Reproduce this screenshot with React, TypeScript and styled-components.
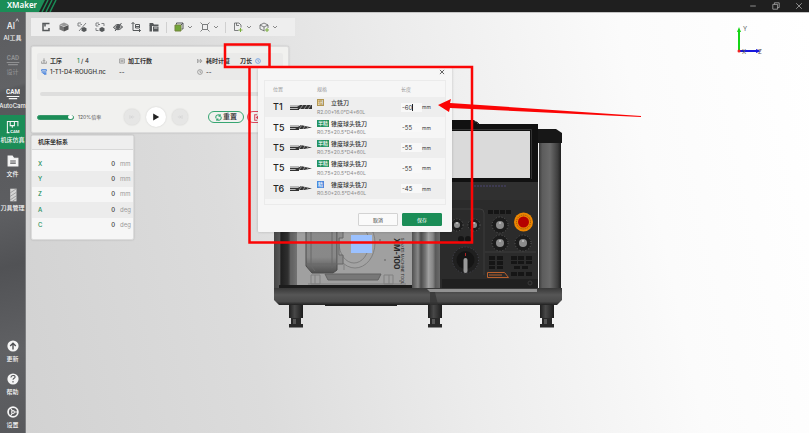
import React, { useState } from "react";
import styled, { createGlobalStyle, css } from "styled-components";

const GREEN = "#1b8d57";

const GlobalStyle = createGlobalStyle`
  * { box-sizing: border-box; }
  body {
    margin: 0;
    font-family: Inter, "Noto Sans CJK SC", sans-serif;
    font-size: 6px;
    line-height: 8px;
    color: #333;
  }
  button, input { font: inherit; color: inherit; margin: 0; padding: 0; }
  button { border: 0; background: none; cursor: pointer; }
  svg { display: block; flex: none; }
`;

const Page = styled.div`
  position: relative;
  display: flex;
  flex-direction: column;
  height: 100vh;
  overflow: hidden;
`;

const TitleBar = styled.header`
  display: flex;
  align-items: center;
  justify-content: space-between;
  flex: none;
  height: 12px;
  background: #1f1f1f;
`;

const Brand = styled.div`
  display: flex;
  align-items: center;
  height: 12px;
`;

const BrandName = styled.h1`
  margin: 0;
  height: 12px;
  padding-left: 7px;
  background: ${GREEN};
  color: #fff;
  font-family: "Noto Sans", sans-serif;
  font-size: 8px;
  line-height: 9px;
  font-weight: 600;
`;

const WindowButtons = styled.div`
  display: flex;
  gap: 15px;
  height: 8px;
  padding-right: 6px;
  button { width: 8px; height: 8px; }
`;

const Body = styled.div`
  display: flex;
  flex: 1;
  min-height: 0;
`;

const Sidebar = styled.nav`
  display: flex;
  flex-direction: column;
  justify-content: space-between;
  flex: none;
  width: 26px;
  padding-top: 1px;
  border-right: 1px solid #7c7d7f;
  background: linear-gradient(165deg, #5b5c5f 0%, #616265 18%, #57585b 19%, #5d5e61 48%, #515255 60%, #606164 80%, #58595c 100%);
`;

const NavItem = styled.button<{ $active?: boolean; $muted?: boolean; $short?: boolean }>`
  display: flex;
  flex-direction: column;
  align-items: center;
  gap: 2px;
  width: 25px;
  height: ${(p) => (p.$short ? 33 : 34)}px;
  padding-top: 5px;
  color: ${(p) => (p.$muted ? "#8f9092" : "#f5f5f5")};
  background: ${(p) => (p.$active ? GREEN : "transparent")};
  font-size: 6px;
  font-weight: 500;
  line-height: 8px;
  white-space: nowrap;
  span { margin: 0 -4px; }
`;

const Viewport = styled.main`
  position: relative;
  display: flex;
  flex-direction: column;
  align-items: flex-start;
  flex: 1;
  min-width: 0;
  padding: 5px;
  border-top: 1px solid #c4c4c4;
  background: linear-gradient(78deg, #d2d2d2 0%, #dcdcdc 28%, #ececec 52%, #fbfbfb 78%, #fff 100%);
`;

const Scene = styled.div`
  position: absolute;
  inset: 0;
  display: flex;
  align-items: center;
  justify-content: center;
`;

const AxisGizmo = styled.div`
  position: absolute;
  top: 12px;
  right: 43px;
`;

const Toolbar = styled.div`
  position: relative;
  display: flex;
  align-items: center;
  gap: 6px;
  height: 18px;
  padding: 0 17px 0 9px;
  background: #eeeeee;
`;

const ToolButton = styled.button<{ $menu?: boolean }>`
  display: flex;
  align-items: center;
  justify-content: center;
  gap: 3px;
  width: ${(p) => (p.$menu ? 20 : 12)}px;
  height: 12px;
  color: #55585a;
`;

const Separator = styled.span`
  width: 1px;
  height: 11px;
  background: #d0d0d0;
`;

const card = css`
  position: relative;
  border: 1px solid #dcdcdc;
  border-radius: 2px;
  background: #f1f1ef;
  box-shadow: 0 0 2px rgba(0, 0, 0, 0.18);
`;

const JobPanel = styled.section`
  ${card}
  display: flex;
  flex-direction: column;
  width: 258px;
  margin-top: 10px;
  padding: 6px 5px 4px;
`;

const JobInfo = styled.div`
  display: grid;
  grid-template-columns: 78px 78px 43px auto;
  row-gap: 3px;
  padding: 4px 4px;
  border-radius: 2px;
  background: #eaeae9;
`;

const InfoItem = styled.div<{ $strong?: boolean }>`
  display: flex;
  align-items: center;
  gap: 3px;
  height: 8px;
  white-space: nowrap;
  font-weight: ${(p) => (p.$strong ? 600 : 500)};
`;

const Count = styled.span`
  margin-left: 12px;
  font-weight: 500;
  white-space: pre;
  b { font-weight: 500; color: ${GREEN}; }
`;

const Track = styled.div`
  height: 4px;
  margin: 12px 3px 0;
  border-radius: 2px;
  background: #dededd;
`;

const Controls = styled.div`
  display: flex;
  align-items: center;
  height: 22px;
  margin-top: 10px;
`;

const Speed = styled.label`
  display: flex;
  align-items: center;
  gap: 4px;
  width: 87px;
  font-size: 5px;
  color: #555;
  white-space: nowrap;
`;

const Range = styled.input`
  appearance: none;
  width: 37px;
  height: 5px;
  border: 1px solid #37976a;
  border-radius: 3px;
  background: ${GREEN};
  &::-webkit-slider-thumb {
    appearance: none;
    width: 5px;
    height: 4px;
    border-radius: 2px;
    background: #fff;
  }
`;

const RoundButton = styled.button<{ $primary?: boolean }>`
  display: flex;
  align-items: center;
  justify-content: center;
  flex: none;
  width: ${(p) => (p.$primary ? 20 : 16)}px;
  height: ${(p) => (p.$primary ? 20 : 16)}px;
  border-radius: 50%;
  background: ${(p) => (p.$primary ? "#fff" : "#e6e6e5")};
  color: ${(p) => (p.$primary ? "#222" : "#cfcfce")};
  box-shadow: 0 0 2px rgba(0, 0, 0, 0.15);
`;

const Transport = styled.div`
  display: flex;
  align-items: center;
  gap: 6px;
`;

const PillGroup = styled.div`
  display: flex;
  gap: 3px;
  margin-left: 20px;
`;

const Pill = styled.button<{ $tone: string }>`
  display: flex;
  align-items: center;
  justify-content: center;
  gap: 1px;
  width: 36px;
  height: 12px;
  border: 1px solid ${(p) => p.$tone};
  border-radius: 6px;
  font-size: 7px;
  font-weight: 500;
  white-space: nowrap;
  svg { color: ${(p) => p.$tone}; }
`;

const CoordPanel = styled.section`
  ${card}
  width: 103px;
  margin-top: 2px;
  padding-bottom: 6px;
  background: #f6f6f6;
`;

const CoordTitle = styled.h2`
  margin: 0 0 6px;
  padding: 2px 6px 3px;
  border-bottom: 1px solid #d8d8d8;
  background: #eeeeee;
  font-size: 6px;
  line-height: 8px;
  font-weight: 600;
`;

const CoordTable = styled.table`
  width: 100%;
  height: 77px;
  border-collapse: collapse;
  font-size: 6px;
  line-height: 8px;
  tr:nth-child(even) { background: #ececec; }
  th, td { padding: 0; font-weight: 500; }
  th { padding-left: 6px; text-align: left; color: ${GREEN}; }
  td { text-align: right; }
  td:last-child { width: 18px; padding-left: 5px; text-align: left; color: #999; font-weight: 400; }
`;

const Dialog = styled.section`
  position: absolute;
  top: 68px;
  left: 258px;
  display: flex;
  flex-direction: column;
  width: 194px;
  padding: 0 6px 6px;
  border-radius: 1px;
  background: #f6f6f6;
  box-shadow: 0 0 3px rgba(0, 0, 0, 0.2);
`;

const CloseButton = styled.button`
  display: flex;
  align-items: center;
  justify-content: center;
  align-self: flex-end;
  width: 8px;
  height: 8px;
  margin-bottom: 4px;
  color: #555;
`;

const ToolFrame = styled.div`
  padding-bottom: 5px;
  border: 1px solid #ebebeb;
`;

const ToolTable = styled.table`
  width: 100%;
  height: 118px;
  border-collapse: collapse;
  table-layout: fixed;
  th, td { padding: 0; text-align: left; }
  thead th {
    height: 16px;
    color: #999;
    font-size: 5px;
    font-weight: 400;
  }
  th:first-child { padding-left: 8px; }
  tbody tr:nth-child(odd) { background: #eeeeee; }
`;

const Slot = styled.th`
  font-size: 9px;
  font-weight: 500;
  color: #222;
`;

const ToolName = styled.div`
  display: flex;
  align-items: center;
  height: 9px;
  font-weight: 500;
  white-space: nowrap;
`;

const BadgeSlot = styled.span`
  width: 14px;
`;

const Badge = styled.span<{ $kind: string }>`
  display: inline-block;
  height: 7px;
  padding: 0 1px;
  font-size: 5px;
  line-height: 7px;
  vertical-align: top;
  ${(p) =>
    p.$kind === "粗"
      ? "color: #b29753; background: #f5efdd; border: 1px solid #b29753; line-height: 5px; padding: 0;"
      : p.$kind === "精"
        ? "color: #fff; background: #4a88dc;"
        : "color: #fff; background: #23915e;"}
`;

const Spec = styled.div`
  color: #888;
  font-size: 5px;
  line-height: 8px;
  white-space: nowrap;
`;

const LengthField = styled.label`
  position: relative;
  display: flex;
  align-items: center;
  font-size: 6px;
`;

const LengthInput = styled.input`
  width: 21px;
  height: 9px;
  border: 0;
  padding: 0 1px;
  background: #f8f8f8;
  outline: 0;
  font-size: 6px;
`;

const Caret = styled.i`
  position: absolute;
  left: 11px;
  width: 1px;
  height: 7px;
  background: #222;
`;

const Unit = styled.span`
  font-size: 5px;
`;

const DialogActions = styled.div`
  display: flex;
  justify-content: flex-end;
  gap: 4px;
  margin-top: 8px;
  padding-right: 4px;
`;

const ActionButton = styled.button<{ $primary?: boolean }>`
  width: 40px;
  height: 13px;
  border: 1px solid ${(p) => (p.$primary ? GREEN : "#d3d3d3")};
  border-radius: 1px;
  background: ${(p) => (p.$primary ? GREEN : "#fafafa")};
  color: ${(p) => (p.$primary ? "#fff" : "#333")};
  font-size: 5px;
  line-height: 8px;
`;

const Markup = styled.svg`
  position: absolute;
  top: 0;
  left: 0;
  pointer-events: none;
`;

type IconProps = { children: React.ReactNode; size?: number; box?: number };
const Icon = ({ children, size = 10, box = 20 }: IconProps) => (
  <svg width={size} height={size} viewBox={`0 0 ${box} ${box}`} fill="none" stroke="currentColor" strokeWidth="2" aria-hidden="true">
    {children}
  </svg>
);

const Chevron = () => (
  <svg width="6" height="4" viewBox="0 0 6 4" fill="none" stroke="#888" aria-hidden="true">
    <path d="M1 1l2 2 2-2" />
  </svg>
);

const smallCube = <path d="m14 10 5 2.500v5L14 20l-5-2.500v-5z" fill="currentColor" stroke="none" />;

const tools = [
  { name: "导入", icon: <path d="M9 3H4v14h12v-5M8 9V3h9" strokeWidth="3" /> },
  {
    name: "模型",
    icon: (
      <g stroke="none">
        <path d="m10 1 9 4-9 4-9-4z" fill="#999" />
        <path d="m1 6 9 4v9l-9-4z" fill="#777" />
        <path d="m19 6-9 4v9l9-4z" fill="#555" />
      </g>
    ),
  },
  { name: "切换模型", icon: <g stroke="#808284"><path d="M8 2H2v6h5M7 5h3M18 2 4 18" />{smallCube}</g> },
  { name: "替换模型", icon: <g stroke="#808284"><path d="M8 2H2v6h5M13 3h5v5M2 12v5h5M6 5h4" />{smallCube}</g> },
  { name: "隐藏", icon: <><path d="M1 11c5-8 13-8 18-1-5 7-13 7-18 1z" fill="#aaa" /><circle cx="10" cy="10" r="3" fill="currentColor" /><path d="M17 2 4 18" /></> },
  { name: "坐标", icon: <><path d="M4 1v16h15M1 4l3-3 3 3M16 14l3 3-3 3" /><path d="M9 5h8v7H9zM9 9h8" /></> },
  { name: "文件夹", icon: <><path d="M1 2h7l2 3h9v3H1z" fill="currentColor" stroke="none" /><path d="M1 7h5v12H1zM8 9h11v10H8z" fill="currentColor" stroke="none" /><path d="M10 12h7" stroke="#ddd" /></> },
];

const menus = [
  { name: "视图", icon: <><path d="M5 5V2h13v12h-3" /><path d="M2 6h12v12H2z" fill="#72a539" stroke="#72833c" /><path d="m14 6 4-4" /></> },
  { name: "适应窗口", icon: <path d="M5 5h10v10H5zM1 1l4 4M19 1l-4 4M1 19l4-4M19 19l-4-4" strokeWidth="1.500" /> },
  { name: "保存", icon: <><path d="M11 17H3V2h9l4 4v5M7 2v5h5" strokeWidth="1.500" /><path d="M15 12v8M11 16h8" stroke="#79ad3d" /></> },
  { name: "添加", icon: <><path d="M11 18 2 14V6l8-4 8 4v6M2 6l8 4 8-4M10 10v8" strokeWidth="1.500" /><path d="M16 12v8M12 16h8" stroke="#79ad3d" /></> },
];

const NavText = ({ children }: { children: string }) => (
  <text x="10" y="12" textAnchor="middle" fontSize="9" fontWeight="700" fontFamily="Roboto, sans-serif" fill="currentColor" stroke="none">
    {children}
  </text>
);

const NavIcon = ({ children }: { children: React.ReactNode }) => (
  <svg width="14" height="14" viewBox="0 0 20 20" fill="none" stroke="currentColor" strokeWidth="1.500" aria-hidden="true">
    {children}
  </svg>
);

const mainNav = [
  { name: "AI工具", icon: <><text x="1" y="16" fontSize="12" fill="currentColor" stroke="none">AI</text><path d="m14 5 2-4 2 4" strokeWidth="1" /></> },
  { name: "设计", muted: true, icon: <><NavText>CAD</NavText><path d="M1 15h18M3 18h14" /></> },
  { name: "AutoCam", icon: <><NavText>CAM</NavText><path d="M1 15h18M4 18h12" /></> },
  { name: "机床仿真", active: true, icon: <><path d="M2 18V2h15v7M6 2v6h6V2M9 8v3M1 18h4" /><text x="6" y="18" fontSize="6" fontWeight="700" fontFamily="Roboto, sans-serif" fill="currentColor" stroke="none">CAM</text></> },
  { name: "文件", icon: <><path d="M3 3h6l2 3h6v11H3z" fill="currentColor" /><path d="M6 10h8M6 13h8" stroke="#56575a" /></> },
  { name: "刀具管理", icon: <><path d="M6 1h9v18H6z" fill="#d5d5d5" stroke="none" /><path d="m6 7 9-6M6 12l9-6M6 17l9-6M9 19l6-4" stroke="#88898b" strokeWidth="1" /></> },
];

const footNav = [
  { name: "更新", icon: <><circle cx="10" cy="10" r="8" fill="currentColor" stroke="none" /><path d="M10 15V7M6 10l4-4 4 4" stroke="#505154" strokeWidth="2" /></> },
  { name: "帮助", icon: <><circle cx="10" cy="10" r="8" fill="currentColor" stroke="none" /><path d="M7 8c0-4 6-4 6-1 0 2-3 2-3 4M10 13v2" stroke="#505154" /></> },
  { name: "设置", icon: <><circle cx="10" cy="10" r="7" strokeWidth="2.500" /><circle cx="10" cy="10" r="2" /><path d="M12 10h5M9 8 6 4M9 12l-3 4" /></> },
];

const Knob = ({ x, y, r = 7 }: { x: number; y: number; r?: number }) => (
  <g>
    <circle cx={x} cy={y} r={r} fill="#1c1c1c" stroke="#5e5e5e" strokeWidth="1" strokeDasharray="1 2" />
    <circle cx={x} cy={y} r={r / 2} fill="#8b8b8b" />
    <path d={`M${x} ${y - 3}v2`} stroke="#ddd" strokeWidth="1" />
  </g>
);

const Foot = ({ x }: { x: number }) => (
  <g>
    <path d={`M${x - 7} 304h14v14h-14z`} fill="url(#foot)" />
    <path d={`M${x - 5} 318h10v6h2v3.500h-14V324h2z`} fill="#292929" />
    <path d={`M${x - 3} 319h3v5h-3z`} fill="#555" />
  </g>
);

const Machine = () => (
  <svg width="290" height="210" viewBox="273 118 290 210" role="img" aria-label="XM-100">
    <defs>
      <linearGradient id="left">
        <stop offset="0" stopColor="#454545" /><stop offset=".2" stopColor="#555" /><stop offset=".25" stopColor="#1f1f1f" />
        <stop offset=".5" stopColor="#303030" /><stop offset=".6" stopColor="#5e5e5e" /><stop offset="1" stopColor="#858585" />
      </linearGradient>
      <linearGradient id="mid">
        <stop offset="0" stopColor="#505050" /><stop offset=".2" stopColor="#888" /><stop offset=".3" stopColor="#4c4c4c" />
        <stop offset=".45" stopColor="#777" /><stop offset=".55" stopColor="#a1a1a1" /><stop offset=".7" stopColor="#858585" />
        <stop offset=".78" stopColor="#5a5a5a" /><stop offset="1" stopColor="#707070" />
      </linearGradient>
      <linearGradient id="pillar">
        <stop offset="0" stopColor="#3c3c3c" /><stop offset=".15" stopColor="#5c5c5c" /><stop offset=".5" stopColor="#6a6a6a" />
        <stop offset=".85" stopColor="#3e3e3e" /><stop offset="1" stopColor="#1f1f1f" />
      </linearGradient>
      <linearGradient id="base" x2="0" y2="1">
        <stop offset="0" stopColor="#383838" /><stop offset=".4" stopColor="#565656" /><stop offset=".8" stopColor="#4a4a4a" /><stop offset="1" stopColor="#202020" />
      </linearGradient>
      <linearGradient id="foot">
        <stop offset="0" stopColor="#1f1f1f" /><stop offset=".4" stopColor="#484848" /><stop offset="1" stopColor="#1c1c1c" />
      </linearGradient>
      <linearGradient id="motor" x2="0" y2="1">
        <stop offset="0" stopColor="#8b8b8b" /><stop offset=".7" stopColor="#888" /><stop offset="1" stopColor="#505050" />
      </linearGradient>
    </defs>
    <Foot x={296} /><Foot x={435} /><Foot x={547} />
    <path d="M274 150h28v138h-28z" fill="url(#left)" />
    <path d="M297 150h115v135H297z" fill="#a0a0a0" />
    <path d="M291 150v135" stroke="#666" />
    <path d="M279 285h133v3H279z" fill="#1c1c1c" />
    <g fill="none" stroke="#808080">
      <path d="M344 215v55M349 215v48M337 234h10v10h-6v12h8" />
      <ellipse cx="355" cy="243" rx="20" ry="25" fill="#a3a3a3" />
      <ellipse cx="354" cy="243" rx="15" ry="20" />
      <path d="M311 275h9v9h-9zM384 275h9v9h-9zM308 284h98M315 275v9M389 275v9" />
    </g>
    <path d="M306 220h31v50l-4 3h-21l-6-7z" fill="url(#motor)" stroke="#4c4c4c" />
    <path d="M311 222v44l4 5M332 222v46M306 264h31" fill="none" stroke="#696969" />
    <path d="M337 228h6v10h-4v17h4v9h-6z" fill="#8d8d8d" stroke="#676767" />
    <path d="M325 274h56l-3 6h-50z" fill="#777" stroke="#626262" />
    <path d="M351 235h21v18h-21z" fill="#9bc1ff" />
    <g fill="#777"><circle cx="385" cy="260" r="1" /><circle cx="380" cy="240" r="1" /><circle cx="400" cy="281" r="1" /></g>
    <text transform="translate(394 238) rotate(90)" fontSize="8" fontWeight="700" fill="#292929">XM-100</text>
    <text transform="translate(401 238) rotate(90)" fontSize="4" fill="#292929">5-AXES MACHINE TOOL</text>
    <path d="M412 150h30v138h-30z" fill="url(#mid)" />
    <path d="M440 124h98v164h-98z" fill="#2b2b2b" />
    <path d="M440 120h34l4 4h60v58h-98z" fill="#111" />
    <path d="M474 122h3l2 2" stroke="#333" />
    <path d="M440 131h90v47h-90z" fill="#dadada" />
    <path d="M440 129.500h91.500V179" fill="none" stroke="#343434" />
    <path d="M440 182h98v18h-98z" fill="#303030" />
    <path d="M474 186h32" stroke="#4b4572" strokeDasharray="2 1" />
    <path d="M446 209h34q4 0 4 4v62M485 252h51" fill="none" stroke="#3d3d3d" />
    <Knob x={457} y={225} r={6} /><Knob x={474} y={225} r={6} />
    <Knob x={500} y={225} r={8} /><Knob x={500} y={243} r={8} /><Knob x={523} y={243} r={8} />
    <circle cx="523.500" cy="222" r="9.500" fill="#ed8500" />
    <circle cx="523.500" cy="222" r="7" fill="none" stroke="#865014" strokeDasharray="1 1" />
    <circle cx="523.500" cy="222" r="5.500" fill="#b50000" />
    <g fill="#151515">
      <path d="M488 210h5v4h-5zM494 210h5v4h-5zM500 210h5v4h-5zM506 210h5v4h-5z" />
      <circle cx="461" cy="239" r="3" /><circle cx="468" cy="239" r="3" />
      <path d="M489 256h6v4h-6zM497 256h6v4h-6zM489 261h6v4h-6zM497 261h6v4h-6zM489 266h6v3h-6zM497 266h6v3h-6z" />
      <path d="M511 256h6v4h-6zM518 256h6v4h-6zM526 256h6v4h-6zM511 261h6v3h-6zM518 261h6v3h-6zM526 261h6v3h-6zM514 266h6v3h-6zM522 266h6v3h-6zM511 272h6v4h-6zM518 272h6v4h-6zM526 272h6v4h-6z" />
    </g>
    <circle cx="465.500" cy="260" r="13" fill="#202020" stroke="#484854" strokeDasharray="1 2" />
    <circle cx="465.500" cy="260" r="9" fill="#151515" />
    <path d="M465.500 260v11" stroke="#999" strokeWidth="4" strokeLinecap="round" />
    <path d="M465.500 253v3" stroke="#a22" />
    <path d="M487.500 272.500h17l4 5h-21zM489 275h13" fill="none" stroke="#b9602d" />
    <path d="M442 279h96v9h-96z" fill="#202020" /><circle cx="530" cy="283" r="2" fill="none" stroke="#3a3a3a" />
    <path d="M539 139h22v149h-22z" fill="url(#pillar)" />
    <path d="M538 129h18l6 4v10h-24z" fill="#171717" />
    <path d="M274 288h288v12l-5 5H279l-5-5z" fill="url(#base)" />
    <path d="M427 289h110v3H430z" fill="#929292" />
    <path d="M430 292h5l3 13h-8z" fill="#333" opacity=".7" />
    <path d="M325 304h72v2h-72z" fill="#222" />
  </svg>
);

const ToolShape = ({ straight }: { straight?: boolean }) => (
  <svg width="23" height="7" viewBox="0 0 23 7" aria-hidden="true">
    <path d="M0 1h9v5H0z" fill="#b7b7b7" />
    <path d="M0 3.500h10M0 5.500h9" stroke="#333" strokeWidth="1" />
    <path d={straight ? "M7 3l3-2h12v4H8z" : "M5 5l6-4 4 1 7 1.500-8 1.500H6z"} fill="#333" />
    <path d={straight ? "m10 5 3-4m1 4 3-4m1 4 3-4" : "m9 5 3-4m1 4 2-3m2 3 1-2"} stroke="#aaa" strokeWidth=".8" />
  </svg>
);

const toolRows = [
  { slot: "T1", kind: "粗", name: "立铣刀", spec: "R2.00*16.0*D4*60L", length: "-60" },
  { slot: "T5", kind: "半精", name: "锥度球头铣刀", spec: "R0.75*20.5*D4*60L", length: "-55" },
  { slot: "T5", kind: "半精", name: "锥度球头铣刀", spec: "R0.75*20.5*D4*60L", length: "-55" },
  { slot: "T5", kind: "半精", name: "锥度球头铣刀", spec: "R0.75*20.5*D4*60L", length: "-55" },
  { slot: "T6", kind: "精", name: "锥度球头铣刀", spec: "R0.50*20.5*D4*60L", length: "-45" },
];

const axes = [["X", "mm"], ["Y", "mm"], ["Z", "mm"], ["A", "deg"], ["C", "deg"]];

function ToolLengthDialog() {
  const [lengths, setLengths] = useState(toolRows.map((t) => t.length));
  return (
    <Dialog role="dialog" aria-label="刀长">
      <CloseButton aria-label="关闭"><Icon size={6}><path d="m3 3 14 14M17 3 3 17" strokeWidth="3" /></Icon></CloseButton>
      <ToolFrame>
        <ToolTable>
          <colgroup><col width="25" /><col width="27" /><col width="84" /><col /></colgroup>
          <thead><tr><th>位置</th><th /><th>规格</th><th>长度</th></tr></thead>
          <tbody>
            {toolRows.map((t, i) => (
              <tr key={i}>
                <Slot scope="row">{t.slot}</Slot>
                <td><ToolShape straight={i === 0} /></td>
                <td>
                  <ToolName><BadgeSlot><Badge $kind={t.kind}>{t.kind}</Badge></BadgeSlot>{t.name}</ToolName>
                  <Spec>{t.spec}</Spec>
                </td>
                <td>
                  <LengthField>
                    <LengthInput
                      aria-label={`${t.slot} 长度`}
                      value={lengths[i]}
                      onChange={(e) => setLengths(lengths.map((v, k) => (k === i ? e.target.value : v)))}
                    />
                    {i === 0 && <Caret />}
                    <Unit>mm</Unit>
                  </LengthField>
                </td>
              </tr>
            ))}
          </tbody>
        </ToolTable>
      </ToolFrame>
      <DialogActions>
        <ActionButton>取消</ActionButton>
        <ActionButton $primary>保存</ActionButton>
      </DialogActions>
    </Dialog>
  );
}

export default function App() {
  const [speed, setSpeed] = useState(120);
  return (
    <Page>
      <GlobalStyle />
      <TitleBar>
        <Brand>
          <BrandName>XMaker</BrandName>
          <svg width="22" height="12" viewBox="0 0 22 12" aria-hidden="true">
            <path d="M0 0h8L2 12H0z" fill={GREEN} />
            <path d="M11 0 5 12M15 0 9 12M19 0l-6 12" stroke={GREEN} strokeWidth="1.500" />
          </svg>
        </Brand>
        <WindowButtons>
          <button aria-label="最小化"><Icon size={8}><path d="M3 10h14" stroke="#aaa" /></Icon></button>
          <button aria-label="还原"><Icon size={8}><path d="M2 6h12v12H2zM6 6V2h12v12h-4" stroke="#aaa" /></Icon></button>
          <button aria-label="关闭窗口"><Icon size={8}><path d="m3 3 14 14M17 3 3 17" stroke="#aaa" /></Icon></button>
        </WindowButtons>
      </TitleBar>
      <Body>
        <Sidebar>
          <div>
            {mainNav.map((n) => (
              <NavItem key={n.name} $active={n.active} $muted={n.muted}><NavIcon>{n.icon}</NavIcon><span>{n.name}</span></NavItem>
            ))}
          </div>
          <div>
            {footNav.map((n) => (
              <NavItem key={n.name} $short><NavIcon>{n.icon}</NavIcon><span>{n.name}</span></NavItem>
            ))}
          </div>
        </Sidebar>
        <Viewport>
          <Scene><Machine /></Scene>
          <AxisGizmo>
            <svg width="32" height="32" viewBox="0 0 32 32" aria-hidden="true">
              <path d="M5 25V6" stroke="#16d516" strokeWidth="2" /><path d="m5 2 2 5H3z" fill="#16d516" />
              <path d="M5 26h18" stroke="#1717dc" strokeWidth="2" /><path d="m27 26-5-2v4z" fill="#1717dc" />
              <circle cx="5" cy="26" r="1.500" fill="#e22" />
              <text x="9" y="6" fontSize="6" fill="#555">Y</text>
              <text x="8" y="29" fontSize="6" fill="#555">X</text>
              <text x="24" y="29" fontSize="6" fill="#555">Z</text>
            </svg>
          </AxisGizmo>
          <Toolbar role="toolbar">
            {tools.map((t) => <ToolButton key={t.name} aria-label={t.name}><Icon>{t.icon}</Icon></ToolButton>)}
            {menus.map((m, i) => (
              <React.Fragment key={m.name}>
                {i % 2 === 0 && <Separator />}
                <ToolButton $menu aria-label={m.name}><Icon>{m.icon}</Icon><Chevron /></ToolButton>
              </React.Fragment>
            ))}
          </Toolbar>
          <JobPanel>
            <JobInfo>
              <InfoItem $strong>
                <Icon size={6}><path d="M10 1v10M6 7l4 4 4-4M2 11v7h16v-7M6 14h8" stroke="#777" /></Icon>工序
                <Count><b>1</b>{" / 4"}</Count>
              </InfoItem>
              <InfoItem $strong><Icon size={6}><path d="M2 3h16v14H2zM5 8h10M5 12h10" stroke="#777" /></Icon>加工行数</InfoItem>
              <InfoItem $strong><Icon size={6}><path d="m2 4 6 6-6 6V4M11 4l6 6-6 6V4" stroke="#777" /></Icon>耗时计算</InfoItem>
              <InfoItem $strong>刀长<Icon size={6}><circle cx="10" cy="10" r="8" stroke="#4285df" /><path d="M10 5v6h3" stroke="#4285df" /></Icon></InfoItem>
              <InfoItem><Icon size={6}><path d="M2 2h16v5H2zM2 11h16M6 15h12M10 19h8" stroke="#4a84df" strokeWidth="3" /></Icon>1-T1-D4-ROUGH.nc</InfoItem>
              <InfoItem>--</InfoItem>
              <InfoItem><Icon size={6}><circle cx="10" cy="10" r="8" stroke="#777" /><path d="M10 5v6h4" stroke="#777" /></Icon>--</InfoItem>
            </JobInfo>
            <Track />
            <Controls>
              <Speed>
                <Range type="range" min={0} max={120} value={speed} onChange={(e) => setSpeed(Number(e.target.value))} />
                {speed}%倍率
              </Speed>
              <Transport>
                <RoundButton aria-label="上一个"><Icon size={6}><path d="M3 4v12M7 10h10M11 5l-5 5 5 5" /></Icon></RoundButton>
                <RoundButton $primary aria-label="播放"><Icon size={8}><path d="m3 1 15 9-15 9z" fill="currentColor" stroke="none" /></Icon></RoundButton>
                <RoundButton aria-label="下一个"><Icon size={6}><path d="M17 4v12M3 10h10M9 5l5 5-5 5" /></Icon></RoundButton>
              </Transport>
              <PillGroup>
                <Pill $tone="#37a672"><Icon size={7}><path d="M3 12a7 7 0 0 1 12-7M17 8a7 7 0 0 1-12 7M15 1v5h-5M5 19v-5h5" strokeWidth="3" /></Icon>重置</Pill>
                <Pill $tone="#d9485c"><Icon size={7}><path d="M9 2H2v16h7M18 10H8M12 6l-5 4 5 4" strokeWidth="3" /></Icon>退出</Pill>
              </PillGroup>
            </Controls>
          </JobPanel>
          <CoordPanel>
            <CoordTitle>机床坐标系</CoordTitle>
            <CoordTable>
              <tbody>
                {axes.map(([axis, unit]) => <tr key={axis}><th scope="row">{axis}</th><td>0</td><td>{unit}</td></tr>)}
              </tbody>
            </CoordTable>
          </CoordPanel>
        </Viewport>
      </Body>
      <ToolLengthDialog />
      <Markup width="645" height="250" viewBox="0 0 645 250" aria-hidden="true">
        <path d="M225 44.500h44.500V67H225zM249.500 67H472v175.500H249.500z" fill="none" stroke="#fb0505" strokeWidth="2.500" />
        <path d="m438 105 13-6-1 4 191 13v1l-191-9-1 4z" fill="#fb0505" />
      </Markup>
    </Page>
  );
}
